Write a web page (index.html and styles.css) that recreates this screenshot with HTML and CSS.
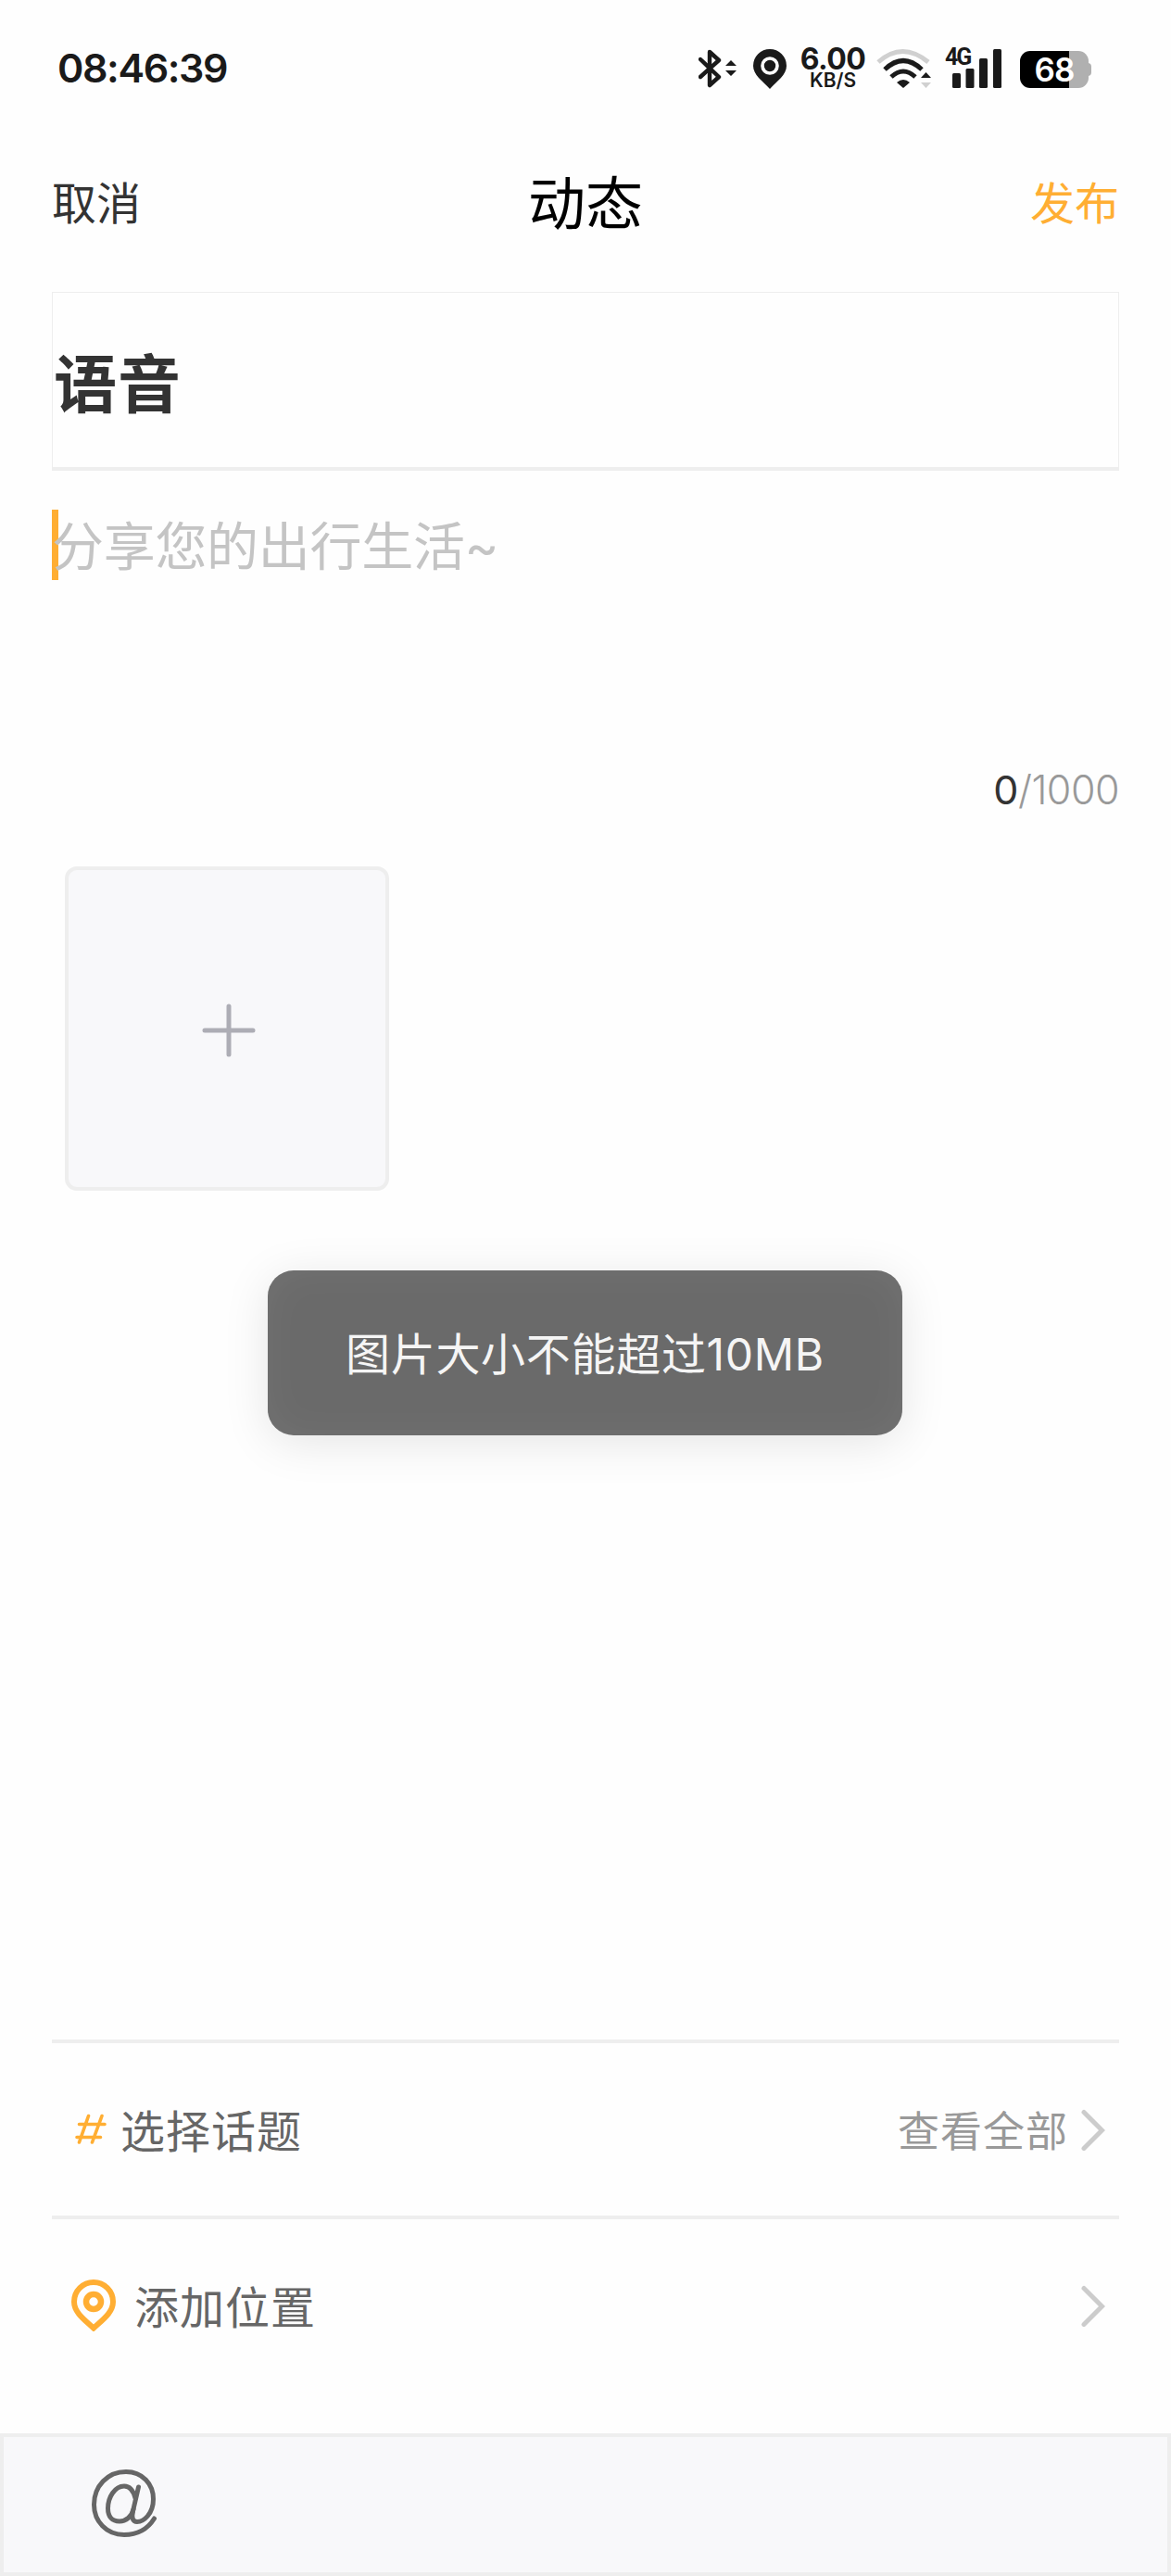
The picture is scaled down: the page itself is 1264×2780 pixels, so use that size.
FILE: index.html
```html
<!DOCTYPE html>
<html lang="zh-CN">
<head>
    <meta charset="UTF-8">
    <title>动态</title>
    <link rel="stylesheet" href="styles.css">
</head>
<body>
<div class="page">
    <div class="status">
        <span class="time">08:46:39</span>
        <div class="status-icons">
            <svg class="bluetooth" width="42" height="44" viewBox="0 0 42 44">
                <path d="M2 12 L22 31 L12 40 V4 L22 13 L2 31" fill="none" stroke="#1a1a1a" stroke-width="4.4" stroke-linecap="round" stroke-linejoin="round"/>
                <path d="M29 19 L35 13 L41 19Z M29 24 L35 30 L41 24Z" fill="#1a1a1a"/>
            </svg>
            <svg class="gps" width="36" height="44" viewBox="0 0 36 44">
                <path d="M18 1 A18 18 0 0 0 0 19 C0 29 10 35 18 44 C26 35 36 29 36 19 A18 18 0 0 0 18 1Z" fill="#1a1a1a"/>
                <circle cx="18" cy="19" r="8" fill="#1a1a1a" stroke="#fefefe" stroke-width="3.6"/>
            </svg>
            <div class="speed">
                <span class="num">6.00</span>
                <span class="unit">KB/S</span>
            </div>
            <svg class="wifi" width="60" height="44" viewBox="0 0 60 44">
                <g fill="none" stroke-width="5">
                    <path d="M2 15 Q28 -8 56 15" stroke="#d0d0d0"/>
                    <path d="M9 23 Q29 4 49 23" stroke="#1a1a1a"/>
                    <path d="M16 31 Q29 19 42 31" stroke="#1a1a1a"/>
                </g>
                <path d="M22 37 Q29 31 36 37 L29 43Z" fill="#1a1a1a"/>
                <path d="M48 32 L53.5 26 L59 32Z" fill="#1a1a1a"/>
                <path d="M48 37 L53.5 43 L59 37Z" fill="#d0d0d0"/>
            </svg>
            <div class="signal">
                <svg width="62" height="44" viewBox="0 0 62 44">
                    <g fill="#1a1a1a">
                        <rect x="8" y="27" width="9" height="16" rx="1.5"/>
                        <rect x="22.500" y="22" width="9" height="21" rx="1.5"/>
                        <rect x="37" y="11" width="9" height="32" rx="1.5"/>
                        <rect x="52" y="1" width="9" height="42" rx="1.5"/>
                    </g>
                </svg>
                <span class="net">4G</span>
            </div>
            <div class="battery">
                <span>68</span>
            </div>
        </div>
    </div>

    <div class="nav">
        <a class="cancel">取消</a>
        <span class="nav-title">动态</span>
        <a class="publish">发布</a>
    </div>

    <div class="content">
        <div class="title-box">语音</div>

        <div class="editor">
            <div class="caret"></div>
            <span class="placeholder">分享您的出行生活~</span>
        </div>
        <div class="count"><b>0</b>/1000</div>

        <div class="add">
            <svg width="58" height="58" viewBox="0 0 58 58">
                <path d="M29 3 V55 M3 29 H55" stroke="#adadb5" stroke-width="5" stroke-linecap="round"/>
            </svg>
        </div>

        <div class="rows">
            <div class="row">
                <svg class="hash" width="34" height="34" viewBox="0 0 34 34">
                    <path d="M14.500 2.500 L4.500 31 M29 2.500 L18.500 31 M4.500 11.500 H32 M2 25.500 H27.500" fill="none" stroke="#ffae33" stroke-width="3.6" stroke-linecap="round"/>
                </svg>
                <span class="label">选择话题</span>
                <span class="more">查看全部</span>
                <svg class="arrow" width="26" height="46" viewBox="0 0 26 46">
                    <path d="M3 4.500 L22.500 24 L3 43.500" fill="none" stroke="#ccc" stroke-width="5" stroke-linecap="round"/>
                </svg>
            </div>
            <div class="row">
                <svg class="pin" width="48" height="56" viewBox="0 0 48 56">
                    <path d="M24 3 A21 21 0 0 0 3 24 C3 36 15 44 24 52.500 C33 44 45 36 45 24 A21 21 0 0 0 24 3Z" fill="none" stroke="#ffae33" stroke-width="6"/>
                    <circle cx="24" cy="24" r="8" fill="none" stroke="#ffae33" stroke-width="6.500"/>
                </svg>
                <span class="label">添加位置</span>
                <svg class="arrow" width="26" height="46" viewBox="0 0 26 46">
                    <path d="M3 4.500 L22.500 24 L3 43.500" fill="none" stroke="#ccc" stroke-width="5" stroke-linecap="round"/>
                </svg>
            </div>
        </div>
    </div>

    <div class="toolbar">
        <svg width="72" height="74" viewBox="0 0 72 74">
            <g fill="none" stroke="#666" stroke-width="5" stroke-linecap="round" stroke-linejoin="round">
                <path d="M68.500 53 C61 65 49 70.500 36 70.500 C17 70.500 3.500 56 3.500 38 C3.500 18 18 2.500 38 2.500 C56 2.500 67.500 16 67.500 32 C67.500 48 57 56.500 50 56.500 C45 56.500 44 52 45.500 45 L51.500 19"/>
                <path d="M48 31 C46 23 42 18 36 18 C26 18 18.500 30 18.500 42 C18.500 51 23 56 31 56 C38 56 44 51 46 43"/>
            </g>
        </svg>
    </div>

    <div class="toast">图片大小不能超过10MB</div>
</div>
</body>
</html>
```
FILE: styles.css
```css
* {
    box-sizing: border-box;
}

body {
    margin: 0;
    background: #fefefe;
    font-family: Inter, "Noto Sans CJK SC", sans-serif;
    color: #333;
}

.page {
    position: relative;
    display: flex;
    flex-direction: column;
    height: 2780px;
    overflow: hidden;
}

/* status bar */
.status {
    display: flex;
    justify-content: space-between;
    height: 148px;
    padding: 52px 89px 0 62px;
    color: #1a1a1a;
}

.time {
    font-size: 43px;
    font-weight: 600;
    line-height: 43px;
    letter-spacing: -1.4px;
}

.status-icons {
    display: flex;
    height: 44px;
}

.gps {
    margin-left: 17px;
}

.speed {
    display: flex;
    flex-direction: column;
    align-items: center;
    width: 72px;
    margin-left: 14px;
    font-weight: 700;
}

.num {
    font-size: 32px;
    line-height: 24px;
    letter-spacing: -0.5px;
}

.unit {
    font-size: 21px;
    font-weight: 600;
    line-height: 22px;
}

.wifi {
    margin-left: 11px;
}

.signal {
    position: relative;
    width: 62px;
    margin-left: 14px;
}

.net {
    position: absolute;
    left: 0;
    top: 0;
    font-family: Roboto, sans-serif;
    font-size: 25px;
    font-weight: 700;
    line-height: 20px;
    letter-spacing: -2px;
}

.battery {
    position: relative;
    width: 74px;
    height: 40px;
    margin: 3px 0 0 19px;
    border-radius: 11px;
    background: linear-gradient(to right, #000 53px, #b0b0b0 53px);
    color: #fff;
    font-size: 35px;
    font-weight: 600;
    line-height: 41px;
    text-align: center;
    letter-spacing: -1px;
}

.battery::after {
    content: "";
    position: absolute;
    right: -3px;
    top: 13px;
    width: 4px;
    height: 14px;
    border-radius: 0 4px 4px 0;
    background: #b0b0b0;
}

/* nav bar */
.nav {
    display: grid;
    grid-template-columns: 1fr auto 1fr;
    align-items: center;
    height: 142px;
    padding: 0 56px 6px;
    font-size: 48px;
}

.nav-title {
    color: #000;
    font-size: 62px;
}

.publish {
    color: #ffae33;
    text-align: right;
}

/* content */
.content {
    display: flex;
    flex: 1;
    flex-direction: column;
    padding: 25px 56px 0;
}

.title-box {
    height: 193px;
    padding-left: 1px;
    border: 1px solid #eee;
    border-bottom: 4px solid #eee;
    font-size: 68px;
    font-weight: 700;
    line-height: 199px;
    letter-spacing: 1px;
}

.editor {
    display: flex;
    height: 260px;
    padding-top: 42px;
}

.caret {
    width: 7px;
    height: 76px;
    margin-right: -7px;
    background: #ffae33;
}

.placeholder {
    position: relative;
    color: #c4c4c4;
    font-size: 56px;
    line-height: 81px;
    letter-spacing: -0.3px;
}

.count {
    height: 167px;
    color: #999;
    font-size: 43px;
    font-weight: 300;
    line-height: 168px;
    text-align: right;
    letter-spacing: -0.5px;
}

.count b {
    color: #333;
    font-weight: 400;
}

.add {
    display: flex;
    align-items: center;
    justify-content: center;
    width: 350px;
    height: 350px;
    margin-left: 14px;
    padding: 3px 0 0 3px;
    border: 4px solid #eee;
    border-radius: 13px;
    background: #f8f8fa;
}

.rows {
    margin-top: auto;
}

.row {
    display: flex;
    align-items: center;
    height: 190px;
    padding: 0 15px 0 21px;
    border-top: 4px solid #eee;
}

.row:last-child {
    height: 235px;
    padding-bottom: 45px;
}

.label {
    padding-bottom: 3px;
    color: #666;
    font-size: 48px;
    letter-spacing: 1px;
}

.hash {
    margin: 0 15px 0 4px;
}

.pin {
    margin-right: 20px;
}

.more {
    margin-left: auto;
    padding-bottom: 2px;
    color: #999;
    font-size: 45px;
    letter-spacing: 1px;
}

.arrow {
    margin-left: 14px;
}

.pin ~ .arrow {
    margin-left: auto;
}

.toolbar {
    height: 154px;
    padding: 35px 0 0 94px;
    border: 4px solid #eee;
    background: #f8f8fa;
}

/* toast over the page */
.toast {
    position: absolute;
    left: 289px;
    top: 1371px;
    width: 685px;
    height: 178px;
    border-radius: 28px;
    background: #6a6a6a;
    box-shadow: 0 8px 50px rgba(0, 0, 0, 0.1), inset 0 0 45px rgba(255, 255, 255, 0.06);
    color: #f5f5f5;
    font-size: 48px;
    line-height: 182px;
    text-align: center;
    letter-spacing: 0.7px;
}
```
